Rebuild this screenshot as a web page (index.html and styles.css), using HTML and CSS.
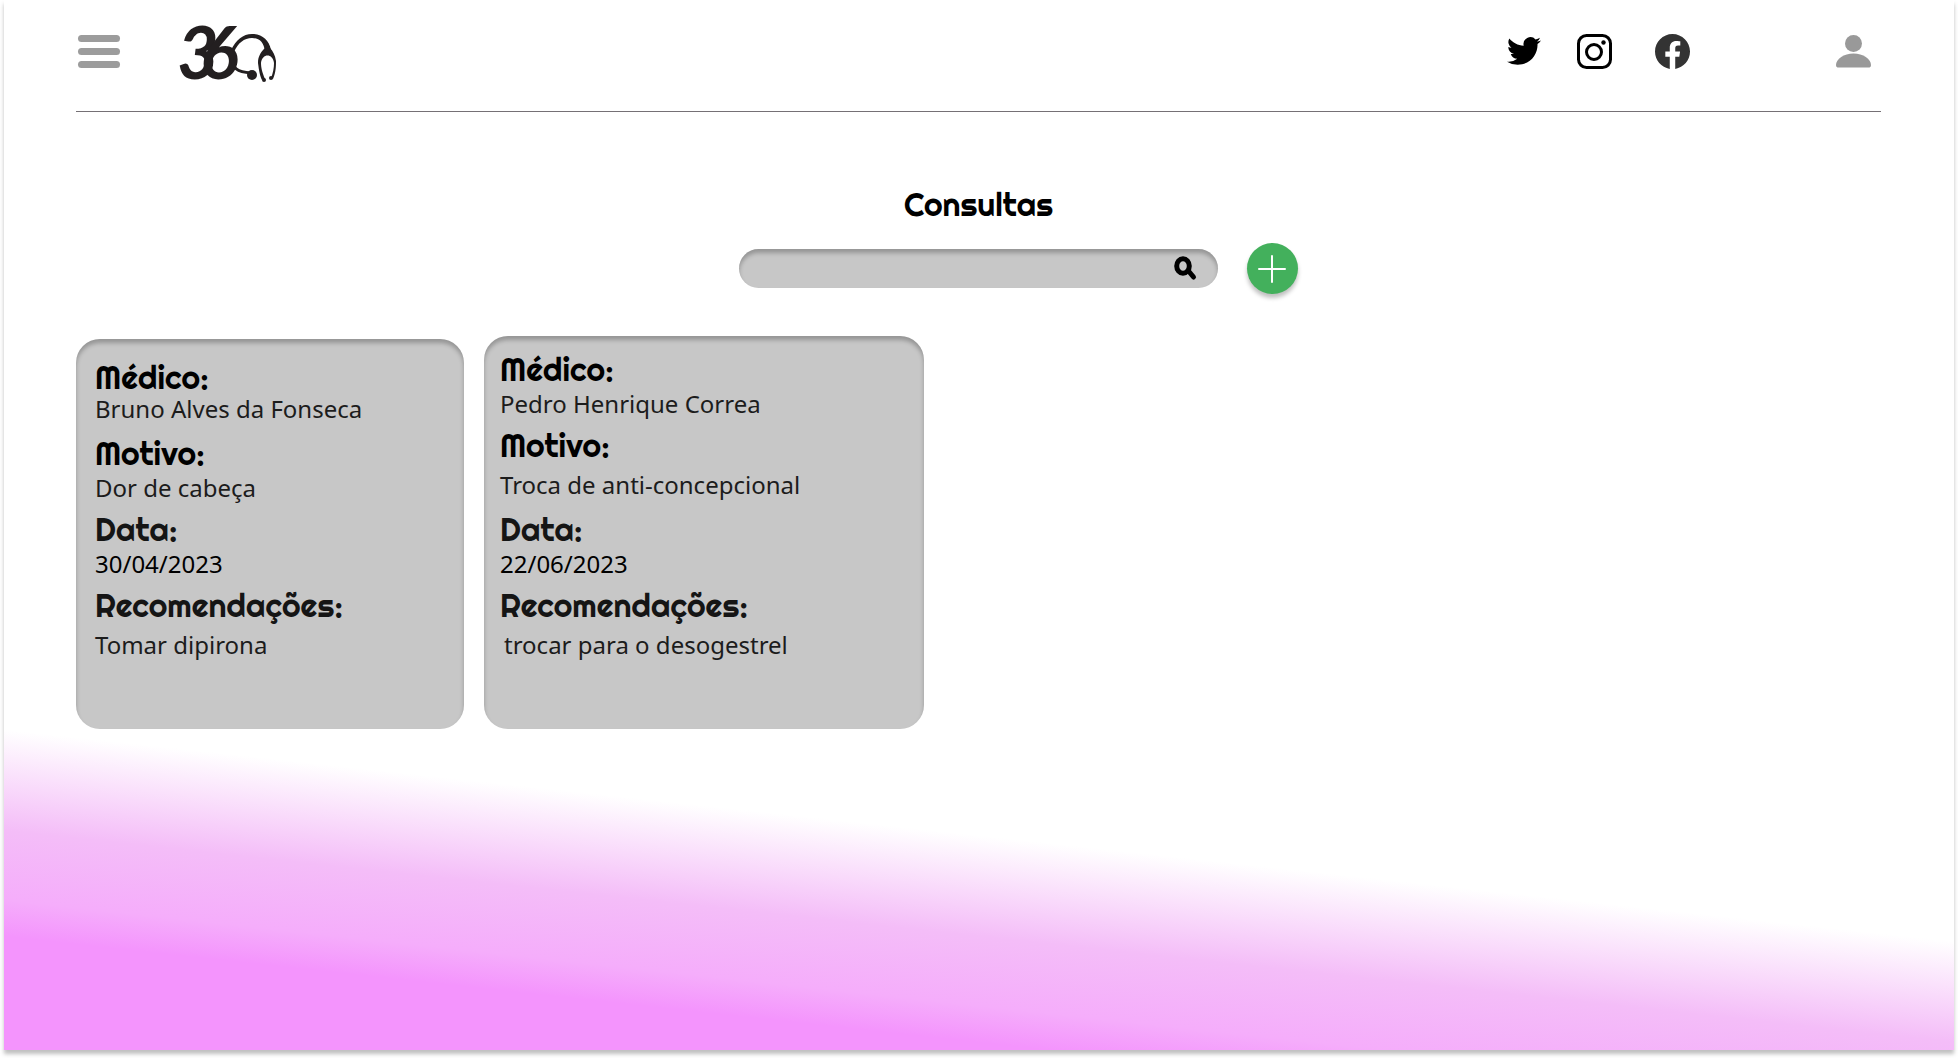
FILE: index.html
```html
<!DOCTYPE html>
<html lang="pt-BR">
<head>
  <meta charset="utf-8">
  <meta name="viewport" content="width=device-width, initial-scale=1">
  <title>Consultas</title>
  <link rel="stylesheet" href="styles.css">
</head>
<body>
  <div class="page">
    <header class="header">
      <button class="menu" type="button" aria-label="Menu">
        <span class="menu-bar"></span>
        <span class="menu-bar"></span>
        <span class="menu-bar"></span>
      </button>
      <a class="logo" href="#" aria-label="360">
        <svg width="98" height="56" viewBox="0 0 98 56" fill="#231f20">
          <text class="logo-text" x="-2 21" y="53">36</text>
          <path d="M52 24C57 14 64 8 73 8C83 8 90 14 92 24L86 26C85 16 80 12 73 12C65 12 59 17 55 26Z"/>
          <path d="M53 32C53 42 58 46 72 47" fill="none" stroke="#231f20" stroke-width="3"/>
          <circle cx="73" cy="49" r="5"/>
          <path d="M86 22C81 27 79 31 79 37C80 45 81 50 83 54L86 53C83 46 82 41 82 37C83 27 94 27 95 37C95 42 94 47 92 52L94 53C97 46 97 40 97 35C96 29 94 25 91 22Z"/>
          <circle cx="85" cy="54" r="2"/>
          <circle cx="92" cy="52" r="2"/>
        </svg>
      </a>
      <nav class="social" aria-label="Redes sociais">
        <a class="social-link" href="#" aria-label="Twitter">
          <svg width="34" height="34" viewBox="0 0 24 24"><path d="M23.95 4.57a10 10 0 0 1-2.82.77 4.96 4.96 0 0 0 2.16-2.72c-.95.55-2 .96-3.13 1.18a4.92 4.92 0 0 0-8.38 4.49C7.69 8.09 4.07 6.13 1.64 3.16a4.93 4.93 0 0 0 1.52 6.57 4.9 4.9 0 0 1-2.23-.61v.06c0 2.39 1.7 4.38 3.95 4.83a5 5 0 0 1-2.21.08 4.94 4.94 0 0 0 4.6 3.42A9.87 9.87 0 0 1 0 19.54a14 14 0 0 0 7.55 2.21c9.05 0 14-7.5 14-13.98 0-.21 0-.42-.02-.63a9.94 9.94 0 0 0 2.46-2.55z"/></svg>
        </a>
        <a class="social-link" href="#" aria-label="Instagram">
          <svg width="35" height="35" viewBox="0 0 35 35" fill="none" stroke="#000" stroke-width="3">
            <rect x="1.5" y="1.5" width="32" height="32" rx="8"/>
            <circle cx="17" cy="18" r="7.5"/>
            <circle cx="26.500" cy="8.500" r="2.200" fill="#000" stroke="none"/>
          </svg>
        </a>
        <a class="social-link social-link-last" href="#" aria-label="Facebook">
          <svg width="35" height="35" viewBox="0 0 24 24" fill="#333"><path d="M24 12.073c0-6.627-5.373-12-12-12s-12 5.373-12 12c0 5.99 4.388 10.954 10.125 11.854v-8.385H7.078v-3.47h3.047V9.43c0-3.007 1.792-4.669 4.533-4.669 1.312 0 2.686.235 2.686.235v2.953H15.83c-1.491 0-1.956.925-1.956 1.874v2.25h3.328l-.532 3.47h-2.796v8.385C19.612 23.027 24 18.062 24 12.073z"/></svg>
        </a>
      </nav>
      <a class="profile" href="#" aria-label="Perfil">
        <svg width="35" height="33" viewBox="0 0 35 33" fill="#999">
          <circle cx="17.500" cy="8.500" r="8.500"/>
          <path d="M0 30C0 24 8 18.500 17.500 18.500S35 24 35 30C35 32 34 32.500 32.500 32.500H2.500C1 32.500 0 32 0 30Z"/>
        </svg>
      </a>
    </header>

    <main>
      <h1 class="title">Consultas</h1>
      <form class="toolbar" role="search">
        <div class="search">
          <input class="search-input" type="search" aria-label="Buscar consultas">
          <button class="search-button" type="submit" aria-label="Buscar">
            <svg width="24" height="24" viewBox="0 0 24 24" fill="none" stroke="#000">
              <ellipse cx="9" cy="9" rx="6.300" ry="7.300" stroke-width="5"/>
              <path d="M14.500 14L19.500 20" stroke-width="5" stroke-linecap="round"/>
            </svg>
          </button>
        </div>
        <button class="add" type="button" aria-label="Adicionar consulta">
          <svg width="27" height="27" viewBox="0 0 27 27" fill="none" stroke="#fff" stroke-width="2" stroke-linecap="round"><path d="M13 1V27M0 14H26"/></svg>
        </button>
      </form>

      <section class="cards" aria-label="Lista de consultas">
        <dl class="card">
          <div class="entry entry-tight"><dt>Médico:</dt><dd>Bruno Alves da Fonseca</dd></div>
          <div class="entry"><dt>Motivo:</dt><dd>Dor de cabeça</dd></div>
          <div class="entry entry-date"><dt>Data:</dt><dd>30/04/2023</dd></div>
          <div class="entry entry-loose"><dt>Recomendações:</dt><dd>Tomar dipirona</dd></div>
        </dl>
        <dl class="card card-wide">
          <div class="entry"><dt>Médico:</dt><dd>Pedro Henrique Correa</dd></div>
          <div class="entry entry-loose"><dt>Motivo:</dt><dd>Troca de anti-concepcional</dd></div>
          <div class="entry entry-date"><dt>Data:</dt><dd>22/06/2023</dd></div>
          <div class="entry entry-loose"><dt>Recomendações:</dt><dd class="indented">trocar para o desogestrel</dd></div>
        </dl>
      </section>
    </main>
  </div>
</body>
</html>
```
FILE: styles.css
```css
* {
  box-sizing: border-box;
}

body {
  margin: 0;
  background: #fff;
  font-family: "Noto Sans", sans-serif;
  color: #000;
}

button {
  margin: 0;
  padding: 0;
  border: 0;
  background: none;
  cursor: pointer;
}

svg {
  display: block;
  overflow: visible;
}

.page {
  display: flow-root;
  min-height: calc(100vh - 8px);
  margin: 0 4px 8px;
  padding: 0 73px 72px 72px;
  background: linear-gradient(186.2deg, #fff 74.6%, #f4bdf8 82.6%, #f5adfb 88.1%, #f494fd 91%);
  box-shadow: 0 4px 4px rgba(0, 0, 0, 0.25);
}

.header {
  display: flex;
  align-items: center;
  padding: 20px 10px 29px 2px;
  margin-bottom: 72px;
  border-bottom: 1px solid #757075;
}

.menu {
  display: flex;
  flex-direction: column;
  gap: 6px;
  width: 42px;
  margin-right: 59px;
}

.menu-bar {
  height: 7px;
  border-radius: 4px;
  background: #9c9c9c;
}

.logo {
  padding-top: 6px;
}

.logo-text {
  font: italic 700 72px "Lato", sans-serif;
}

.social {
  display: flex;
  align-items: center;
  gap: 36px;
  margin-left: auto;
  margin-right: 146px;
}

.social-link-last {
  margin-left: 7px;
}

.title {
  margin: 0 0 19px;
  font: 400 32px/40px "Righteous", "Lato", sans-serif;
  text-align: center;
}

.toolbar {
  display: grid;
  grid-template-columns: 1fr minmax(0, 479px) 1fr;
  align-items: center;
  gap: 29px;
  margin-bottom: 42px;
}

.search {
  grid-column: 2;
  display: flex;
  align-items: center;
  height: 39px;
  padding: 0 20px;
  border-radius: 20px;
  background: #c7c7c7;
  box-shadow: inset 0 4px 4px rgba(0, 0, 0, 0.25);
}

.search-input {
  flex: 1;
  min-width: 0;
  border: 0;
  outline: 0;
  background: none;
  font: 20px "Noto Sans", sans-serif;
}

.add {
  display: grid;
  place-items: center;
  width: 51px;
  height: 51px;
  border-radius: 50%;
  background: #43b05c;
  box-shadow: 0 4px 4px rgba(0, 0, 0, 0.25);
}

.cards {
  display: flex;
  flex-wrap: wrap;
  align-items: flex-end;
  gap: 20px;
}

.card {
  width: 388px;
  margin: 0;
  padding: 20px 19px 58px;
  border-radius: 24px;
  background: #c7c7c7;
  box-shadow: inset 0 4px 4px rgba(0, 0, 0, 0.25);
}

.card-wide {
  width: 440px;
  padding: 15px 16px 58px;
}

.entry {
  display: flex;
  flex-direction: column;
  gap: 4px;
  min-height: 76px;
}

.entry-tight {
  gap: 1px;
}

.entry-loose {
  gap: 9px;
  min-height: 84px;
}

.entry dt {
  font: 400 32px/36px "Righteous", "Lato", sans-serif;
}

.entry dd {
  margin: 0;
  font-size: 24px;
  line-height: 26px;
  color: #1c1c1c;
}

.entry-date dt,
.entry:last-child dt {
  color: #151515;
}

.entry-date dd {
  color: #000;
}

.entry .indented {
  padding-left: 4px;
}
```
